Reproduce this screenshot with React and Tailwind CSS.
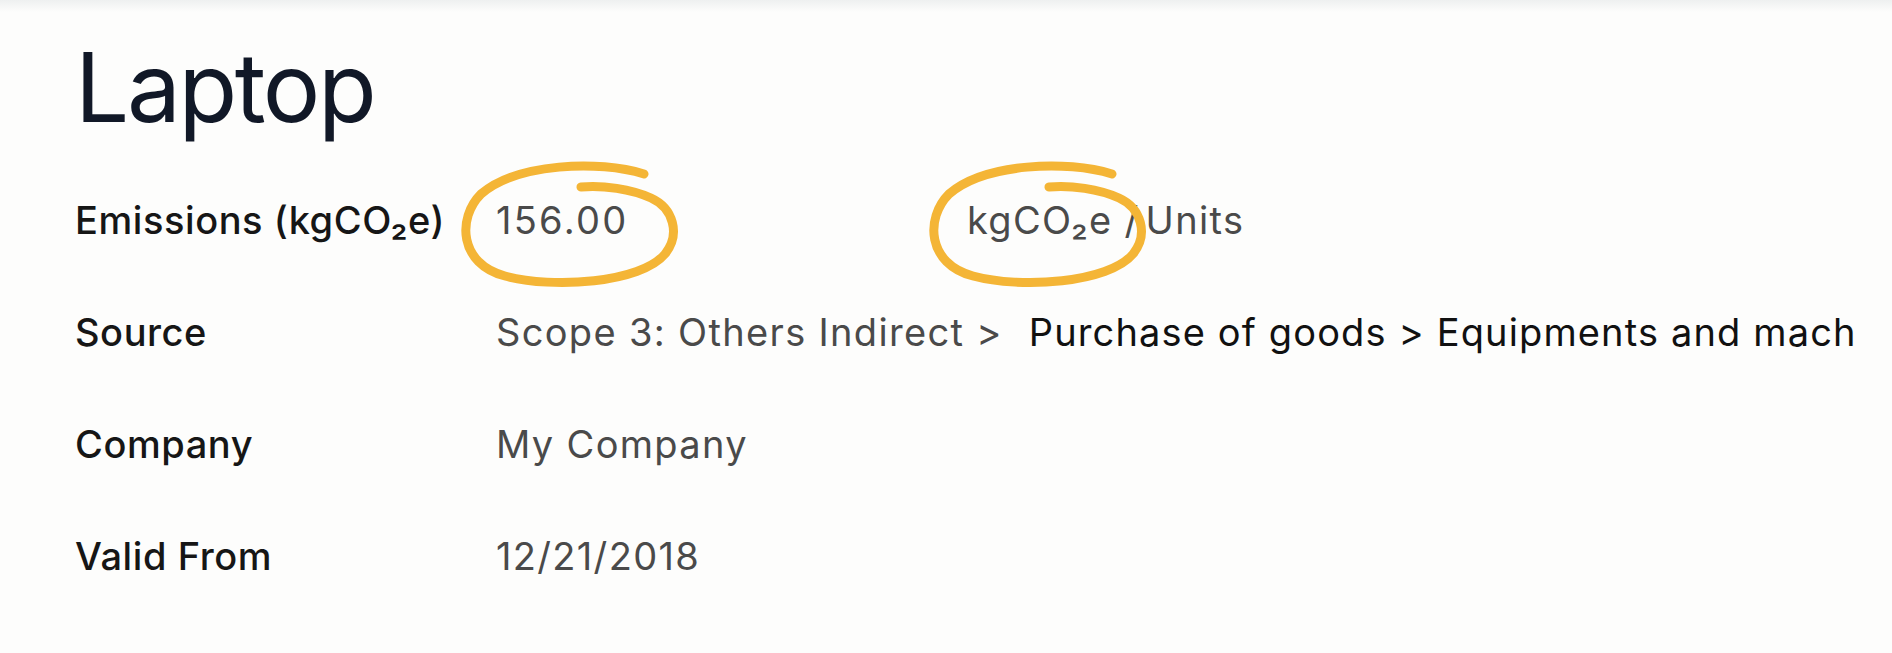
import React from "react";

function Loop({ className }) {
  return (
    <svg
      className={className}
      width="226"
      height="140"
      viewBox="0 0 226 140"
      fill="none"
    >
      <path
        d="M185 20 C140 6, 58 9, 22 40 C-2 64, 0 110, 46 122 C94 135, 182 129, 206 100 C222 80, 214 54, 192 44 C172 35, 144 31, 122 33"
        stroke="#f4b536"
        strokeWidth="9"
        strokeLinecap="round"
        strokeLinejoin="round"
      />
    </svg>
  );
}

function Row({ label, children }) {
  return (
    <div className="grid grid-cols-[421px_1fr] h-[112px] items-center">
      <div className="text-[38px] leading-[54px] font-medium tracking-[0.015em] text-[#161616] whitespace-nowrap">
        {label}
      </div>
      <div className="text-[38px] leading-[54px] tracking-[0.035em] text-[#4a4a4a] whitespace-nowrap overflow-hidden">
        {children}
      </div>
    </div>
  );
}

export default function App() {
  return (
    <div className="relative min-h-screen w-full overflow-hidden bg-[#fdfdfc] font-[family-name:Inter,sans-serif]">
      <div className="h-[12px] bg-linear-to-b from-[#eef0f0] to-[#fdfdfc]" />
      <div className="pl-[75px] pt-[27px] pr-[20px]">
        <h1 className="text-[96px] leading-none font-normal tracking-[-0.025em] text-[#111827]">
          Laptop
        </h1>
        <div className="mt-[29px]">
          <Row label="Emissions (kgCO₂e)">
            <div className="grid grid-cols-[471px_1fr]">
              <span className="tracking-[0.06em]">156.00</span>
              <span>
                kgCO₂e /<span className="ml-[6px]">Units</span>
              </span>
            </div>
          </Row>
          <Row label="Source">
            <span>Scope 3: Others Indirect &gt;</span>
            <span className="ml-[26px] tracking-[0.03em] text-[#111111]">
              Purchase of goods &gt; Equipments and mach
            </span>
          </Row>
          <Row label="Company">
            <span>My Company</span>
          </Row>
          <Row label="Valid From">
            <span>12/21/2018</span>
          </Row>
        </div>
      </div>
      <Loop className="absolute left-[459px] top-[154px]" />
      <Loop className="absolute left-[927px] top-[154px]" />
    </div>
  );
}
